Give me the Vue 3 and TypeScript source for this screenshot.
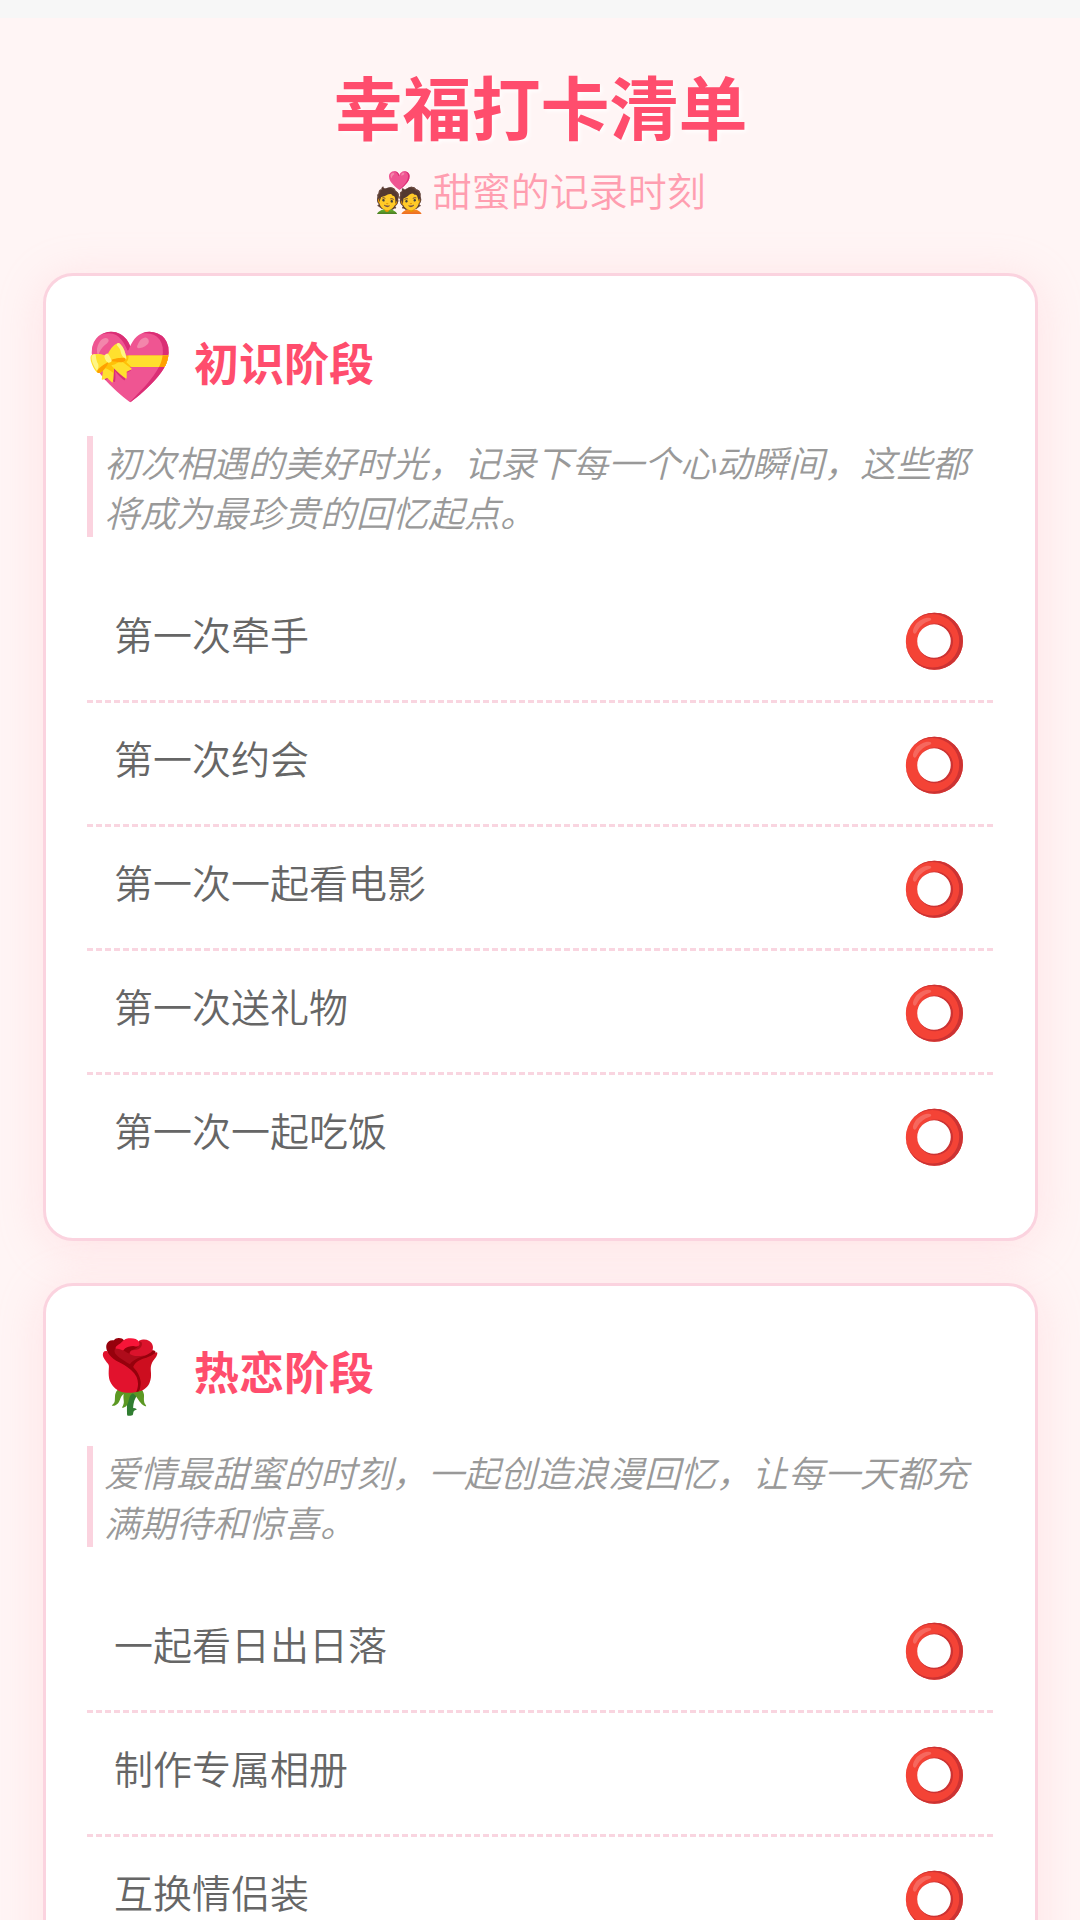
<script setup lang="ts">
interface Stage {
  icon: string;
  title: string;
  desc: string;
  items: string[];
}

const stages: Stage[] = [
  {
    icon: "💝",
    title: "初识阶段",
    desc: "初次相遇的美好时光，记录下每一个心动瞬间，这些都将成为最珍贵的回忆起点。",
    items: ["第一次牵手", "第一次约会", "第一次一起看电影", "第一次送礼物", "第一次一起吃饭"]
  },
  {
    icon: "🌹",
    title: "热恋阶段",
    desc: "爱情最甜蜜的时刻，一起创造浪漫回忆，让每一天都充满期待和惊喜。",
    items: ["一起看日出日落", "制作专属相册", "互换情侣装"]
  }
];
</script>

<template>
  <div class="page">
    <div class="top-bar"></div>
    <div class="content">
      <header class="header">
        <h1>幸福打卡清单</h1>
        <p>💑 甜蜜的记录时刻</p>
      </header>

      <section v-for="stage in stages" :key="stage.title" class="card">
        <div class="card-head">
          <span class="card-icon">{{ stage.icon }}</span>
          <h2>{{ stage.title }}</h2>
        </div>
        <p class="desc">{{ stage.desc }}</p>
        <ul>
          <li v-for="item in stage.items" :key="item">
            <span class="label">{{ item }}</span>
            <span class="mark">⭕</span>
          </li>
        </ul>
      </section>
    </div>
  </div>
</template>

<style>
html,
body {
  margin: 0;
  background: #fff5f5;
}
</style>

<style scoped>
.page {
  width: 1080px;
  height: 1920px;
  overflow: hidden;
  background: #fff5f5;
  font-family: "Noto Sans CJK SC", "Noto Sans", sans-serif;
}

.top-bar {
  height: 18px;
  background: #f7f7f7;
}

.content {
  padding: 0 42px 0 43px;
}

.header {
  text-align: center;
  padding-top: 45px;
  margin-bottom: 56px;
}

h1 {
  margin: 0;
  font-size: 69px;
  line-height: 84px;
  font-weight: 700;
  color: #ff4d6d;
  text-shadow: 2px 2px 4px #fff;
}

.header p {
  margin: 14px 0 0;
  font-size: 39px;
  line-height: 56px;
  font-weight: 350;
  color: #ff9eb0;
}

.card {
  background: #fff;
  border: 3px solid #fbd3df;
  border-radius: 30px;
  box-shadow: 0 6px 45px rgba(255, 182, 193, .3);
  padding: 37px 42px 42px 41px;
  margin-bottom: 42px;
}

.card-head {
  display: flex;
  align-items: center;
  gap: 26px;
  margin-bottom: 27px;
}

.card-icon {
  width: 82px;
  margin-left: -1px;
  font-size: 70px;
  line-height: 96px;
  text-align: center;
}

h2 {
  margin: 0;
  font-size: 45px;
  font-weight: 700;
  color: #ff4d6d;
}

.desc {
  margin: 0 0 42px;
  padding-left: 11px;
  border-left: 6px solid #fbd3df;
  font-size: 36px;
  line-height: 50.4px;
  font-style: italic;
  font-weight: 350;
  color: #999;
}

ul {
  margin: 0;
  padding: 0;
  list-style: none;
}

li {
  display: flex;
  align-items: center;
  justify-content: space-between;
  height: 121px;
  padding: 0 26px 0 27px;
  border-bottom: 3px dashed #f9d5e0;
}

li:last-child {
  border-bottom: none;
}

.label {
  font-size: 39px;
  line-height: 56px;
  font-weight: 350;
  color: #666;
  margin-bottom: 12px;
}

.mark {
  font-size: 52px;
  line-height: 62px;
  margin-bottom: 4px;
}
</style>
